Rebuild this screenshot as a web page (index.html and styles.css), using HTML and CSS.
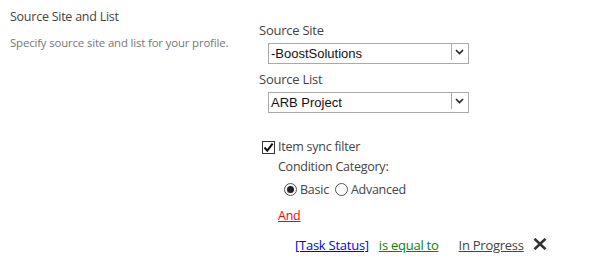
FILE: index.html
```html
<!DOCTYPE html>
<html lang="en">
<head>
  <meta charset="UTF-8" />
  <title>Source Site and List</title>
  <link rel="stylesheet" href="styles.css">
</head>
<body>
  <!-- ======= SECTION ROW ======= -->
  <div class="section">
    <div class="section-desc">
      <h3>Source Site and List</h3>
      <p>Specify source site and list for your profile.</p>
    </div>

    <div class="section-body">
      <label class="field-label">Source Site</label>
      <div class="select-wrap">
        <select class="select">
          <option>-BoostSolutions</option>
        </select>
        <span class="select-arrow">
          <svg width="9" height="6" viewBox="0 0 9 6"><path d="M1 1 L4.5 4.5 L8 1" fill="none" stroke="#222" stroke-width="1.6"/></svg>
        </span>
      </div>

      <label class="field-label">Source List</label>
      <div class="select-wrap">
        <select class="select">
          <option>ARB Project</option>
        </select>
        <span class="select-arrow">
          <svg width="9" height="6" viewBox="0 0 9 6"><path d="M1 1 L4.5 4.5 L8 1" fill="none" stroke="#222" stroke-width="1.6"/></svg>
        </span>
      </div>

      <!-- filter -->
      <div class="filter">
        <label class="check-row">
          <span class="checkbox">
            <svg width="11" height="11" viewBox="0 0 11 11"><path d="M1.5 5.5 L4.3 8.6 L9.6 1.6" fill="none" stroke="#111" stroke-width="2"/></svg>
          </span>
          Item sync filter
        </label>
        <div class="filter-body">
          <div class="cond-label">Condition Category:</div>
          <div class="radios">
            <label class="radio-item"><span class="radio on"></span>Basic</label>
            <label class="radio-item"><span class="radio"></span>Advanced</label>
          </div>
          <a class="and-link">And</a>
          <div class="cond-row">
            <a class="cond-field">[Task Status]</a>
            <a class="cond-op">is equal to</a>
            <a class="cond-value">In Progress</a>
            <span class="cond-remove">
              <svg width="14" height="12" viewBox="0 0 14 12"><path d="M1.5 0.8 L12.5 11.2 M12.5 0.8 L1.5 11.2" stroke="#333" stroke-width="2.6"/></svg>
            </span>
          </div>
        </div>
      </div>
    </div>
  </div>
</body>
</html>
```

FILE: styles.css
```css
*,*::before,*::after{box-sizing:border-box;margin:0;padding:0}

body {
  font-family: "Segoe UI", "Open Sans", sans-serif;
  background: #fff;
  color: #444;
  letter-spacing: -0.25px;
}

/* ======= SECTION ======= */
.section{display:flex;padding-top:8px}
.section-desc{width:259px;padding-left:10px}
.section-desc h3{font-weight:400;font-size:12.5px;line-height:17px;color:#444}
.section-desc p{margin-top:10px;font-size:11.4px;line-height:15px;color:#777;letter-spacing:-0.15px}

.section-body{display:flex;flex-direction:column;align-items:flex-start}
.field-label{display:block;font-size:13px;line-height:18px;margin-top:8px;color:#444}
.section-body .field-label:first-child{margin-top:13px}

/* Select boxes */
.select-wrap{position:relative;margin:2px 0 0 9px;width:201px;height:21px}
.select{appearance:none;-webkit-appearance:none;width:100%;height:100%;border:1px solid #aaa;background:#fff;font-family:"Liberation Sans",Arial,sans-serif;font-size:13px;letter-spacing:0;color:#111;padding:0 0 0 2px;border-radius:0;outline:none}
.select-arrow{position:absolute;top:2px;right:2px;width:16px;height:17px;border-left:1px solid #aaa;display:flex;align-items:center;justify-content:center;pointer-events:none}

/* Filter */
.filter{margin-top:28px;margin-left:3px}
.check-row{display:flex;align-items:center;gap:3px;font-size:12.5px;line-height:16px;color:#444}
.checkbox{width:13px;height:13px;border:1px solid #333;display:flex;align-items:center;justify-content:center}
.filter-body{padding-left:16px}
.cond-label{font-size:12.5px;line-height:17px;margin-top:3px}
.radios{display:flex;gap:6px;margin-top:6px;padding-left:6px}
.radio-item{display:flex;align-items:center;gap:3px;font-size:12.5px;line-height:17px}
.radio{width:13px;height:13px;border:1px solid #555;border-radius:50%;display:flex;align-items:center;justify-content:center}
.radio.on::after{content:"";width:7px;height:7px;border-radius:50%;background:#222}

.and-link{display:inline-block;margin-top:9px;font-size:12.5px;line-height:17px;color:#f00;text-decoration:underline}

.cond-row{display:flex;align-items:center;margin-top:12px;padding-left:17px;font-size:13px;line-height:17px}
.cond-row a{text-decoration:underline}
.cond-field{color:#00f}
.cond-op{color:#080;margin-left:10px}
.cond-value{color:#444;margin-left:20px}
.cond-remove{margin-left:9px;display:flex;margin-top:-4px}
```
